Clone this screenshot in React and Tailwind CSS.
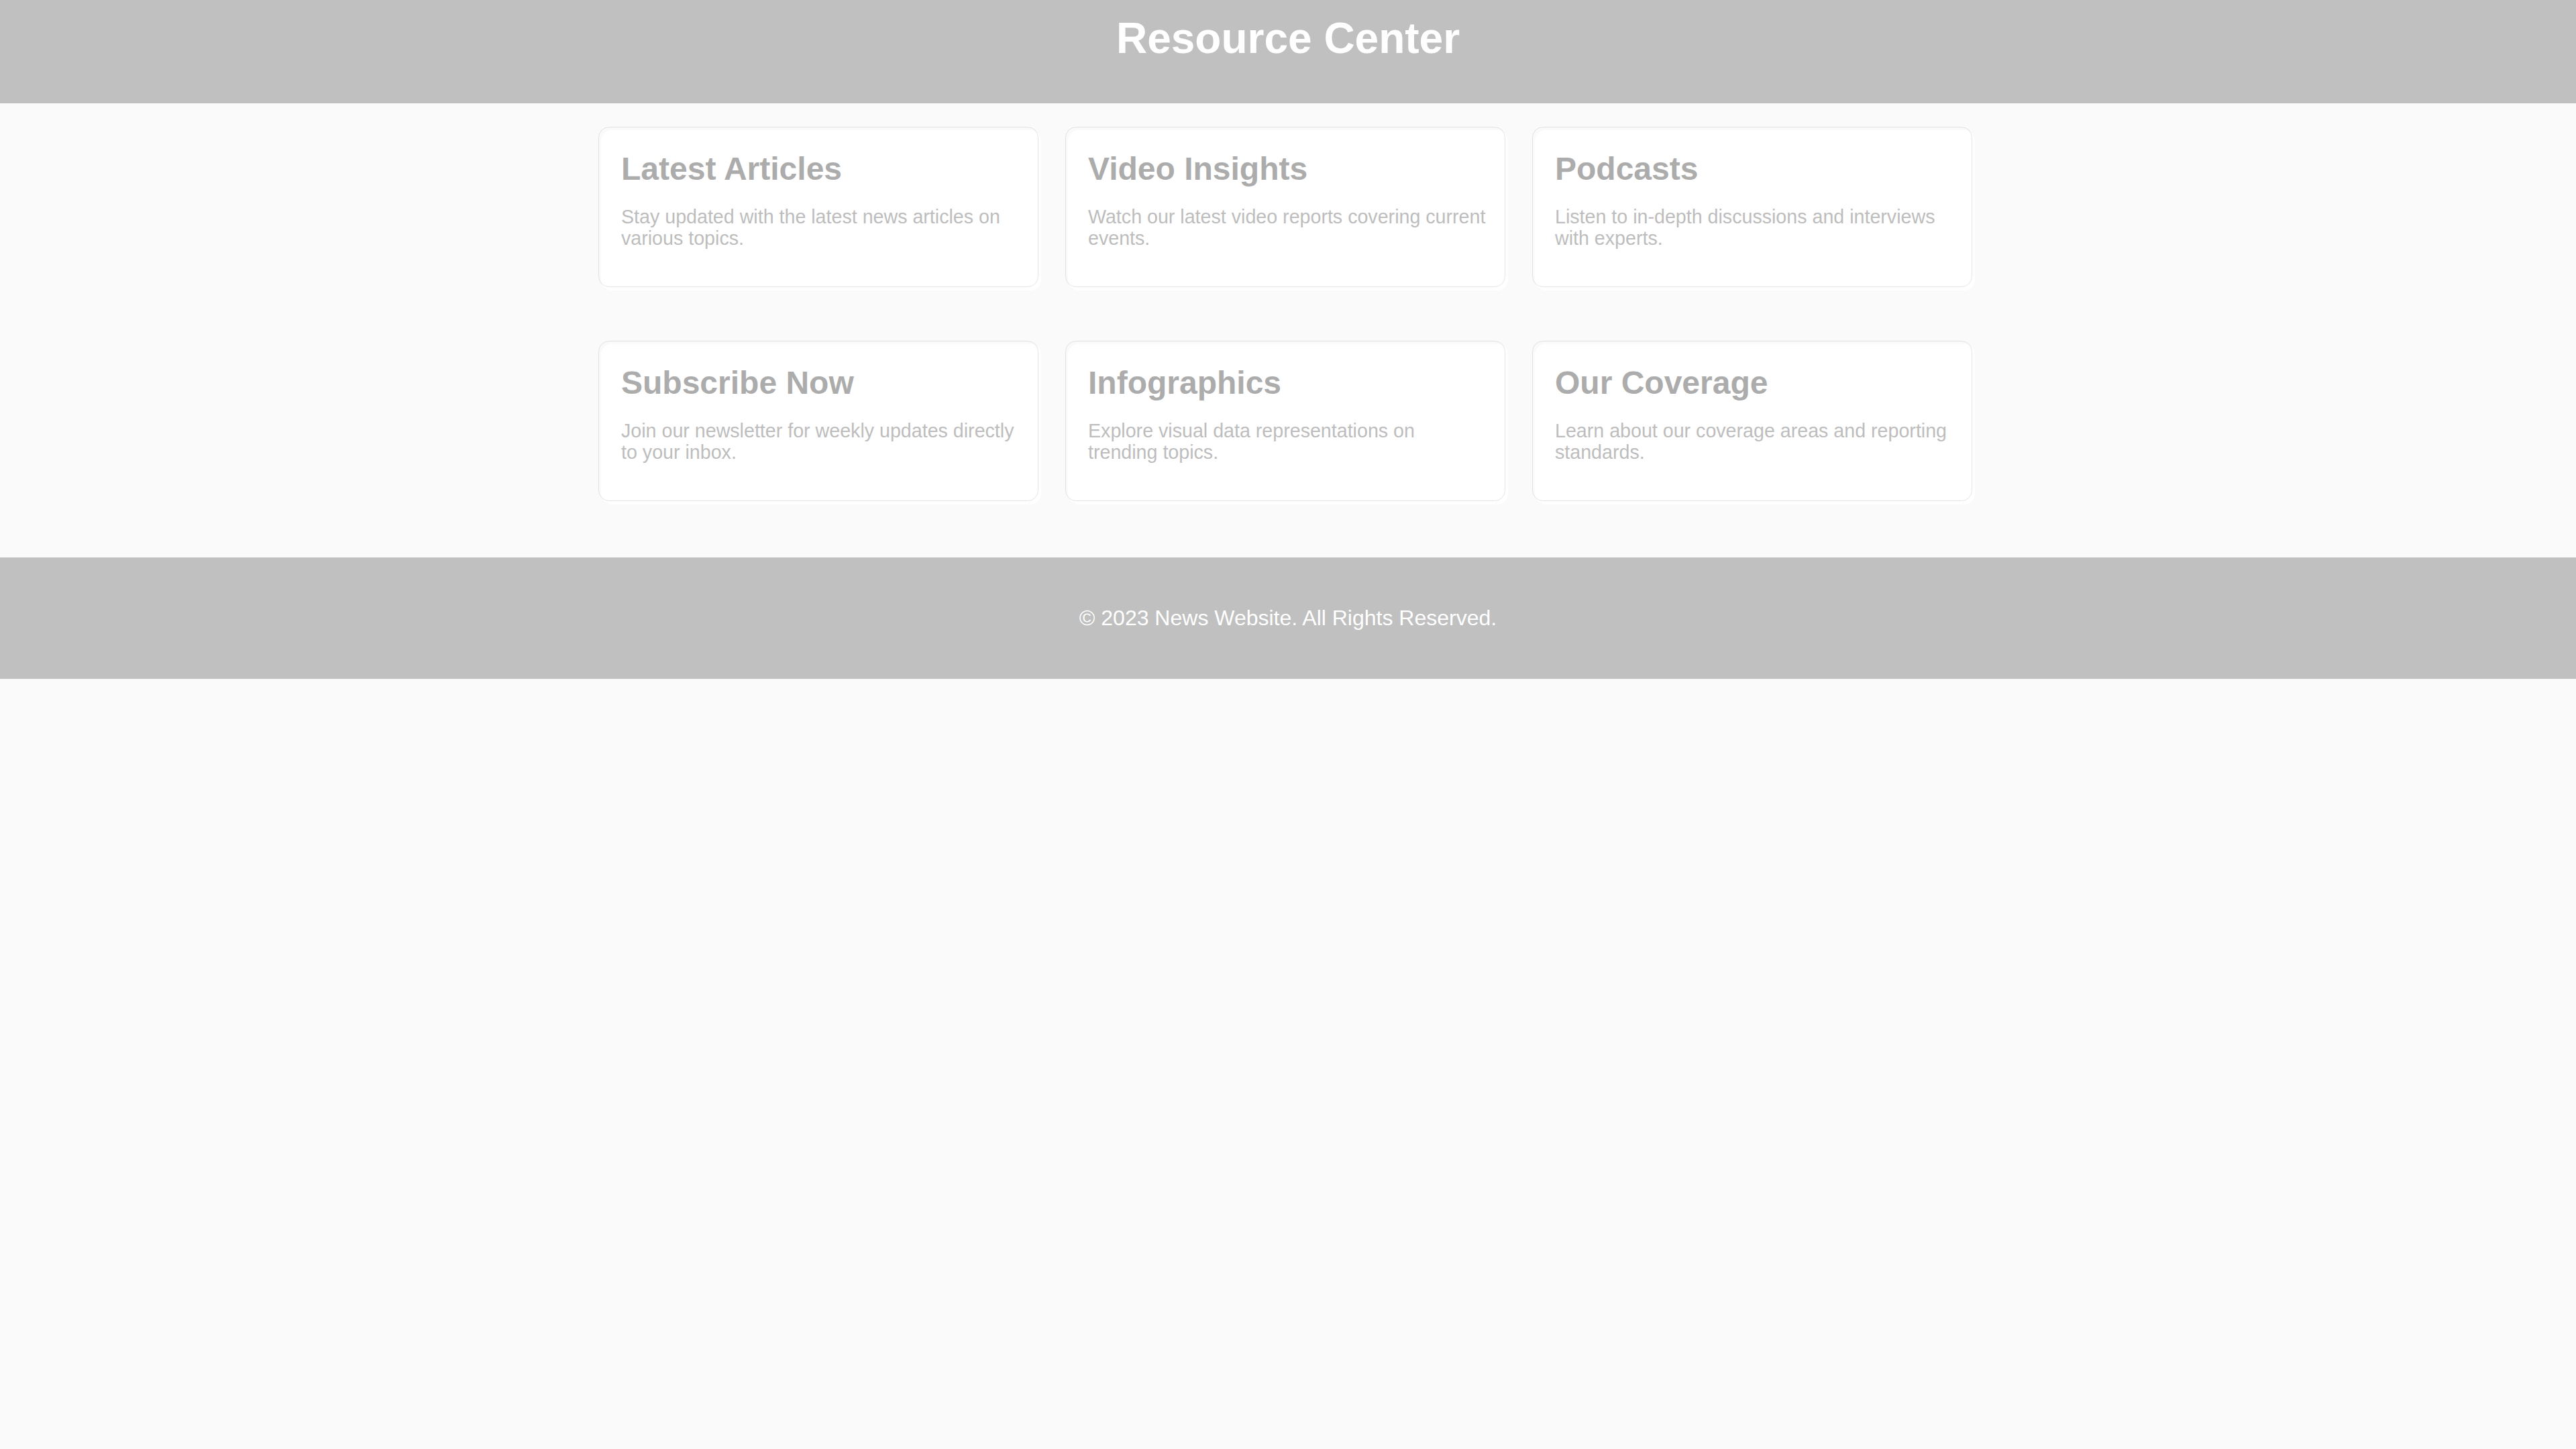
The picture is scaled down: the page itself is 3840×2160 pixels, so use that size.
import React from "react";

const cards = [
  { title: "Latest Articles", text: "Stay updated with the latest news articles on various topics." },
  { title: "Video Insights", text: "Watch our latest video reports covering current events." },
  { title: "Podcasts", text: "Listen to in-depth discussions and interviews with experts." },
  { title: "Subscribe Now", text: "Join our newsletter for weekly updates directly to your inbox." },
  { title: "Infographics", text: "Explore visual data representations on trending topics." },
  { title: "Our Coverage", text: "Learn about our coverage areas and reporting standards." },
];

function Card({ title, text }) {
  return (
    <div className="relative bg-white rounded-[16px] h-[239px] p-[30px]">
      <div className="pointer-events-none absolute inset-0 -translate-x-[4px] -translate-y-[5px] rounded-[16px] border border-[rgba(0,0,0,0.1)]" />
      <h2 className="relative text-[48px] leading-[55px] font-bold text-[#acacac] m-0">{title}</h2>
      <p className="relative mt-[28px] text-[28.64px] leading-[32px] text-[#bdbdbd]">{text}</p>
    </div>
  );
}

export default function App() {
  return (
    <div
      className="min-h-[2160px] bg-[#fafafa]"
      style={{ fontFamily: '"Liberation Sans", Arial, sans-serif' }}
    >
      <header className="h-[154px] bg-[#c0c0c0] pt-[20px] text-center">
        <h1 className="text-[64px] leading-[74px] font-bold text-white">Resource Center</h1>
      </header>
      <main className="pt-[40px] pb-[79px]">
        <div className="mx-auto w-[2048px] grid grid-cols-3 gap-x-[40px] gap-y-[80px]">
          {cards.map((c) => (
            <Card key={c.title} {...c} />
          ))}
        </div>
      </main>
      <footer className="h-[181px] bg-[#c0c0c0] flex items-center justify-center">
        <p className="text-[32px] leading-[37px] text-white">© 2023 News Website. All Rights Reserved.</p>
      </footer>
    </div>
  );
}
